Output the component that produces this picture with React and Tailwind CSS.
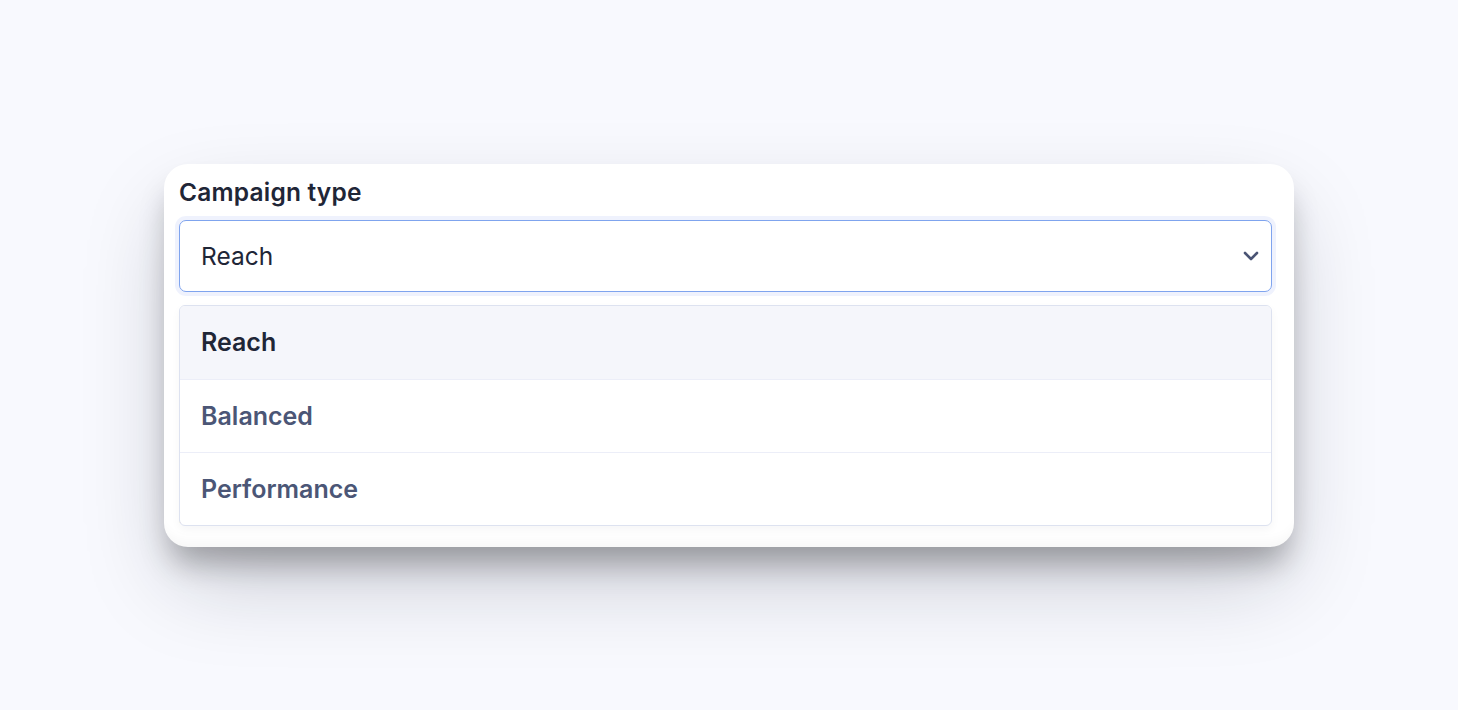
import React from "react";

export default function App() {
  const options = ["Reach", "Balanced", "Performance"];
  return (
    <div className="flex h-[710px] w-full items-center justify-center bg-[#f8f9fe]" style={{ fontFamily: "Inter, 'Noto Sans', sans-serif" }}>
      <div className="w-[1130px] rounded-[24px] bg-white pl-[15px] pr-[22px] pt-[12px] pb-[16px] shadow-[0_22px_30px_-6px_rgba(0,0,0,0.28),0_40px_90px_-10px_rgba(20,24,40,0.22),inset_0_-14px_14px_-10px_rgba(0,0,0,0.04)]">
        <label className="block text-[24.5px] font-semibold leading-[32px] tracking-[0.2px] text-[#1f2637]">Campaign type</label>
        <div className="relative mt-[12px]">
          <button className="flex h-[72px] w-full items-center justify-between rounded-[7px] border border-[#7fa4ee] bg-white pl-[21px] pr-[12px] pt-[2px] text-left shadow-[0_0_0_4px_rgba(120,150,240,0.12)]">
            <span className="text-[24.5px] text-[#1f2637]">Reach</span>
            <svg width="16" height="10" viewBox="0 0 16 10" fill="none" stroke="#4a5474" strokeWidth="2.6" strokeLinecap="round" strokeLinejoin="round" className="-mt-[2px]">
              <path d="M2 2 L8 8 L14 2" />
            </svg>
          </button>
          <div className="mt-[14px] flex h-[225px] items-end pb-[1px]">
            <p className="text-[15px] leading-[24px] text-[#4b5676]">Reach maximizes, Balanced, Performance, and more.</p>
          </div>
          <div className="absolute left-0 right-0 top-[85px] overflow-hidden rounded-[6px] border border-[#dde2f0] bg-white shadow-[0_4px_10px_rgba(20,24,40,0.04)]">
            {options.map((o, i) => (
              <div
                key={o}
                className={
                  i === 0
                    ? "flex h-[73px] items-center bg-[#f5f6fb] px-[21px] pt-[2px] text-[25px] font-semibold text-[#1f2637]"
                    : "flex h-[73px] items-center border-t border-[#eceef8] px-[21px] pt-[2px] text-[25px] font-semibold text-[#4b5676]"
                }
              >
                {o}
              </div>
            ))}
          </div>
        </div>
      </div>
    </div>
  );
}
